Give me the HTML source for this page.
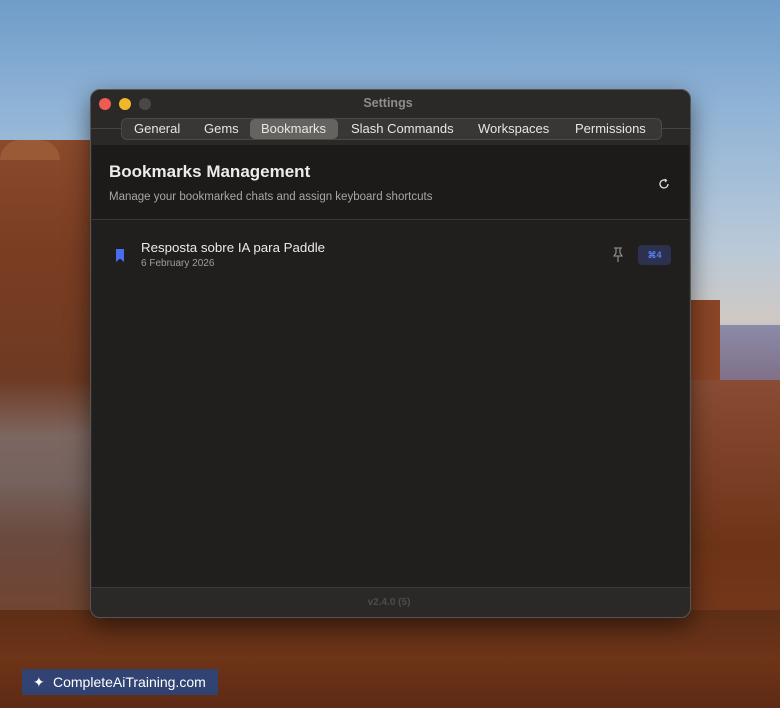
<!DOCTYPE html>
<html><head><style>
*{margin:0;padding:0;box-sizing:border-box}
body{width:780px;height:708px;overflow:hidden;position:relative;font-family:"Liberation Sans",sans-serif;background:linear-gradient(180deg,#6f9cc9 0%,#8fb3d6 15%,#b9c9d8 35%,#cfc9c5 45%,#b8aab5 50%);}
.abs{position:absolute}
</style></head><body>
<!-- terrain -->
<div class="abs" style="left:0;top:140px;width:95px;height:568px;background:linear-gradient(180deg,#8a4a2c 0%,#7a3d22 20%,#6e3a22 42%,#7d6660 52%,#76625e 60%,#6a4a3e 70%,#7a3e22 100%)"></div>
<div class="abs" style="left:0;top:140px;width:60px;height:20px;background:#9a5a36;border-radius:20px 20px 0 0"></div>
<div class="abs" style="left:690px;top:325px;width:90px;height:60px;background:linear-gradient(180deg,#8b8aa8,#7f6f86)"></div>
<div class="abs" style="left:690px;top:300px;width:30px;height:408px;background:#8a4426"></div>
<div class="abs" style="left:690px;top:380px;width:90px;height:328px;background:linear-gradient(180deg,#8a4c34,#6e3418 50%,#7a3a1c)"></div>
<div class="abs" style="left:0;top:610px;width:780px;height:98px;background:linear-gradient(180deg,#5e2e16,#6e3418 50%,#5e2a14)"></div>
<!-- window -->
<div class="abs" style="left:90px;top:89px;width:601px;height:529px;background:#2b2927;border:1px solid #555;border-radius:10px;box-shadow:0 8px 24px rgba(0,0,0,.5);overflow:hidden">
  <div class="abs" style="left:8px;top:8px;width:12px;height:12px;border-radius:50%;background:#ee5b50"></div>
  <div class="abs" style="left:28px;top:8px;width:12px;height:12px;border-radius:50%;background:#f0b72a"></div>
  <div class="abs" style="left:48px;top:8px;width:12px;height:12px;border-radius:50%;background:#4a4846"></div>
  <div class="abs" style="left:-3px;top:6px;width:600px;text-align:center;color:#8f8c89;font-weight:bold;font-size:12.5px">Settings</div>
  <div class="abs" style="left:0;top:38px;width:600px;height:1px;background:#444"></div>
  <div class="abs" style="left:1px;top:55px;width:597px;height:442px;background:#211f1d"></div>
  <div class="abs" style="left:1px;top:55px;width:597px;height:75px;background:#1c1b1a;border-bottom:1px solid #3a3836"></div>
  <div class="abs" style="left:30px;top:28px;width:541px;height:22px;background:#393735;border:1px solid #4c4a48;border-radius:6px;font-size:13px;color:#e8e6e3">
    <span class="abs" style="left:12px;top:2px">General</span>
    <span class="abs" style="left:82px;top:2px">Gems</span>
    <span class="abs" style="left:128px;top:0px;width:88px;height:20px;background:#66625f;border-radius:5px"></span>
    <span class="abs" style="left:139px;top:2px">Bookmarks</span>
    <span class="abs" style="left:229px;top:2px">Slash Commands</span>
    <span class="abs" style="left:356px;top:2px">Workspaces</span>
    <span class="abs" style="left:453px;top:2px">Permissions</span>
  </div>
  <div class="abs" style="left:18px;top:72px;color:#eeeceb;font-weight:bold;font-size:17px">Bookmarks Management</div>
  <div class="abs" style="left:18px;top:101px;color:#aaa6a2;font-size:11.5px">Manage your bookmarked chats and assign keyboard shortcuts</div>
  <svg class="abs" style="left:566px;top:87px" width="14" height="14" viewBox="0 0 14 14"><path d="M11 7a4 4 0 1 1-2-3.5" fill="none" stroke="#ddd" stroke-width="1.3"/><path d="M8 2l1.5 1.5L8 5" fill="none" stroke="#ddd" stroke-width="1.2"/></svg>
  <svg class="abs" style="left:24px;top:159px" width="10" height="13" viewBox="0 0 10 13"><path d="M1 0h8v13L5 9.5 1 13z" fill="#4a6cf0"/></svg>
  <div class="abs" style="left:50px;top:150px;color:#eceae7;font-size:13.3px">Resposta sobre IA para Paddle</div>
  <div class="abs" style="left:50px;top:168px;color:#a29e9a;font-size:10px">6 February 2026</div>
  <svg class="abs" style="left:521px;top:157px" width="12" height="16" viewBox="0 0 12 16" fill="none" stroke="#999" stroke-width="1.1"><path d="M2 1h8M4 1v5L2 9h8L8 6V1M6 9v6"/></svg>
  <div class="abs" style="left:547px;top:155px;width:33px;height:20px;background:#2c3150;border-radius:4px;color:#5a7cf0;font-size:9px;font-weight:bold;text-align:center;line-height:20px">⌘4</div>
  <div class="abs" style="left:0;top:497px;width:600px;height:1px;background:#3e3c3a"></div>
  <div class="abs" style="left:-2px;top:507px;width:600px;text-align:center;color:#4e4c4a;font-size:10px;font-weight:bold">v2.4.0 (5)</div>
</div>
<div class="abs" style="left:22px;top:669px;width:196px;height:26px;background:rgba(40,70,130,.85);color:#fff;font-size:14px;line-height:26px;padding-left:31px">CompleteAiTraining.com</div>
<div class="abs" style="left:33px;top:674px;color:#fff;font-size:14px">✦</div>
</body></html>
